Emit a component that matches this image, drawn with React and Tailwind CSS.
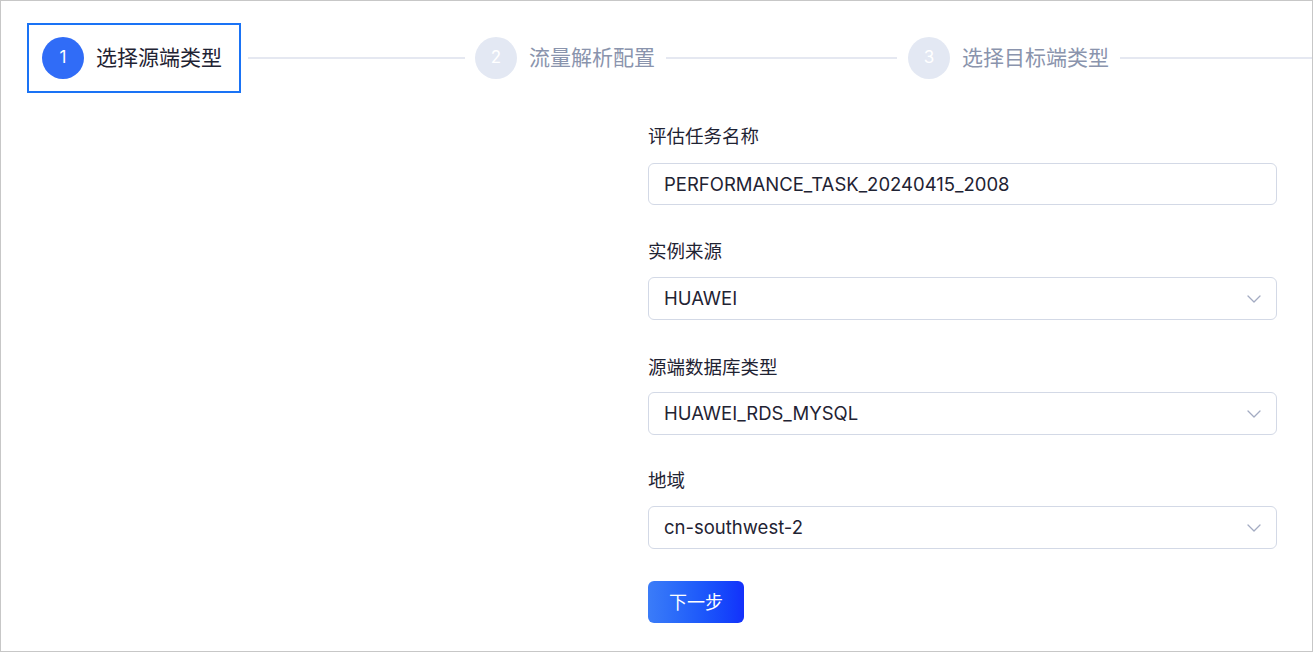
import React, { useState } from 'react';

const FONT = "font-['Inter','Noto_Sans_CJK_SC',sans-serif]";

function Chevron() {
  return (
    <svg width="14" height="8" viewBox="0 0 14 8" fill="none" className="shrink-0">
      <polyline points="1,1 7,7 13,1" stroke="#a3abc2" strokeWidth="1.3" strokeLinecap="round" strokeLinejoin="round" />
    </svg>
  );
}

function StepCircle({ n, active }) {
  return (
    <div
      className={`w-[42px] h-[42px] rounded-full flex items-center justify-center text-[17px] text-white shrink-0 ${
        active ? 'bg-[#306cf7]' : 'bg-[#e3e8f3]'
      }`}
    >
      {n}
    </div>
  );
}

function Field({ label, labelGap, className, children }) {
  return (
    <div className={className}>
      <div className={`text-[18.5px] leading-[24px] text-[#1f2333] ${labelGap}`}>{label}</div>
      {children}
    </div>
  );
}

function Select({ value }) {
  return (
    <div className="h-[43px] border border-[#d3d9e6] rounded-[6px] px-[15px] flex items-center justify-between bg-white cursor-pointer">
      <span className="text-[18.5px] text-[#1f2333]">{value}</span>
      <Chevron />
    </div>
  );
}

export default function App() {
  const [taskName, setTaskName] = useState('PERFORMANCE_TASK_20240415_2008');

  return (
    <div className={`w-[1313px] h-[652px] bg-white border border-[#c7c7c7] overflow-hidden ${FONT}`}>
      {/* Steps */}
      <div className="flex items-center pt-[22px] pl-[26px]">
        <div className="flex items-center border-2 border-[#1a73f5] pl-[13px] pr-[17px] py-[12px] shrink-0">
          <StepCircle n={1} active />
          <span className="ml-[12px] text-[21px] leading-[28px] text-[#1f2333]">选择源端类型</span>
        </div>
        <div className="ml-[7px] mr-[10px] w-[217px] h-[2px] bg-[#e5e8f1]" />

        <StepCircle n={2} />
        <span className="ml-[12px] text-[21px] leading-[28px] text-[#8a94ad] shrink-0">流量解析配置</span>
        <div className="ml-[11px] mr-[11px] w-[231px] h-[2px] bg-[#e5e8f1]" />

        <StepCircle n={3} />
        <span className="ml-[12px] text-[21px] leading-[28px] text-[#8a94ad] shrink-0">选择目标端类型</span>
        <div className="ml-[11px] flex-1 h-[2px] bg-[#e5e8f1]" />
      </div>

      {/* Form */}
      <div className="ml-[647px] w-[629px] mt-[31px]">
        <Field label="评估任务名称" labelGap="mb-[15px]" className="mb-[34px]">
          <input
            value={taskName}
            onChange={(e) => setTaskName(e.target.value)}
            className="w-full h-[42px] border border-[#d3d9e6] rounded-[6px] px-[15px] text-[18.5px] text-[#1f2333] outline-none"
          />
        </Field>
        <Field label="实例来源" labelGap="mb-[14px]" className="mb-[35px]">
          <Select value="HUAWEI" />
        </Field>
        <Field label="源端数据库类型" labelGap="mb-[13px]" className="mb-[33px]">
          <Select value="HUAWEI_RDS_MYSQL" />
        </Field>
        <Field label="地域" labelGap="mb-[14px]" className="mb-[32px]">
          <Select value="cn-southwest-2" />
        </Field>

        <button className="w-[96px] h-[42px] rounded-[6px] bg-linear-to-r from-[#3b7cf8] to-[#1430fb] text-white text-[18px] cursor-pointer">
          下一步
        </button>
      </div>
    </div>
  );
}
